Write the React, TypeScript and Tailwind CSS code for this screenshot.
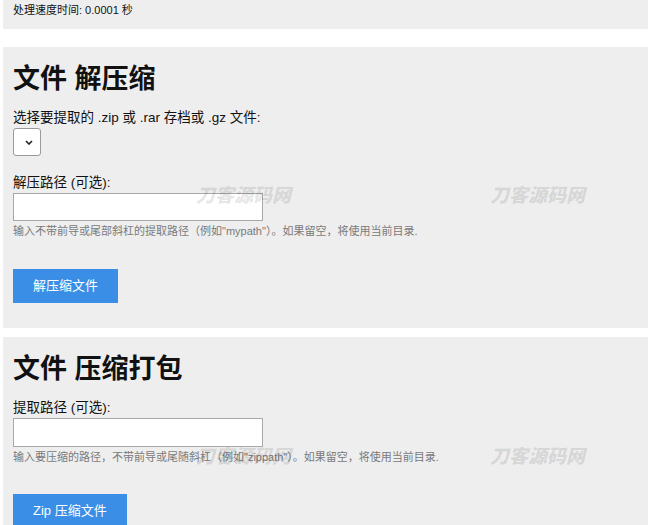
import React from "react";

const font = { fontFamily: '"Liberation Sans", Arial, "Noto Sans CJK SC", sans-serif' };

function Chevron() {
  return (
    <svg width="8" height="5" viewBox="0 0 8 5" className="block">
      <path d="M1 1 L4 4 L7 1" fill="none" stroke="#222" strokeWidth="1.6" />
    </svg>
  );
}

function Watermark({ className }: { className: string }) {
  return (
    <div
      className={`pointer-events-none absolute text-[19px] font-black italic leading-none text-[rgba(0,0,0,0.11)] ${className}`}
      style={font}
    >
      刀客源码网
    </div>
  );
}

export default function App() {
  return (
    <div className="relative min-h-[525px] w-[648px] overflow-hidden bg-white text-[#111]" style={font}>
      {/* status panel */}
      <div className="ml-[3px] h-[29px] bg-[#eeeeee] pl-[10px] pt-[3px]">
        <p className="text-[11px] leading-[14px]">处理速度时间: 0.0001 秒</p>
      </div>

      {/* unzip panel */}
      <div className="ml-[3px] mt-[18px] bg-[#eeeeee] pb-[25px] pl-[10px] pt-[14px]">
        <h2 className="text-[27px] font-bold leading-[36px]">文件 解压缩</h2>
        <p className="mt-[11px] text-[13.5px] leading-[20px]">选择要提取的 .zip 或 .rar 存档或 .gz 文件:</p>
        <div className="flex h-[28px] w-[28px] items-center justify-center rounded-[3px] border border-[#9a9a9a] bg-white pl-[4px]">
          <Chevron />
        </div>
        <p className="mt-[17px] text-[13.5px] leading-[20px]">解压路径 (可选):</p>
        <div className="h-[28px] w-[250px] border border-[#a8a8a8] bg-white" />
        <p className="mt-[3px] text-[11px] leading-[14px] text-[#7a7a7a]">
          输入不带前导或尾部斜杠的提取路径（例如"mypath"）。如果留空，将使用当前目录.
        </p>
        <button className="mt-[31px] flex h-[34px] items-center justify-center bg-[#3a8ee6] px-[20px] text-[13px] text-white">
          解压缩文件
        </button>
      </div>

      {/* zip panel */}
      <div className="ml-[3px] mt-[9px] bg-[#eeeeee] pb-[25px] pl-[10px] pt-[14px]">
        <h2 className="text-[27px] font-bold leading-[36px]">文件 压缩打包</h2>
        <p className="mt-[11px] text-[13.5px] leading-[20px]">提取路径 (可选):</p>
        <div className="h-[29px] w-[250px] border border-[#a8a8a8] bg-white" />
        <p className="mt-[3px] text-[11px] leading-[14px] text-[#7a7a7a]">
          输入要压缩的路径，不带前导或尾随斜杠（例如"zippath"）。如果留空，将使用当前目录.
        </p>
        <button className="mt-[30px] flex h-[34px] items-center justify-center bg-[#3a8ee6] px-[20px] text-[13px] text-white">
          Zip 压缩文件
        </button>
      </div>

      <Watermark className="left-[196px] top-[186px]" />
      <Watermark className="left-[490px] top-[186px]" />
      <Watermark className="left-[196px] top-[447px]" />
      <Watermark className="left-[490px] top-[447px]" />
    </div>
  );
}
